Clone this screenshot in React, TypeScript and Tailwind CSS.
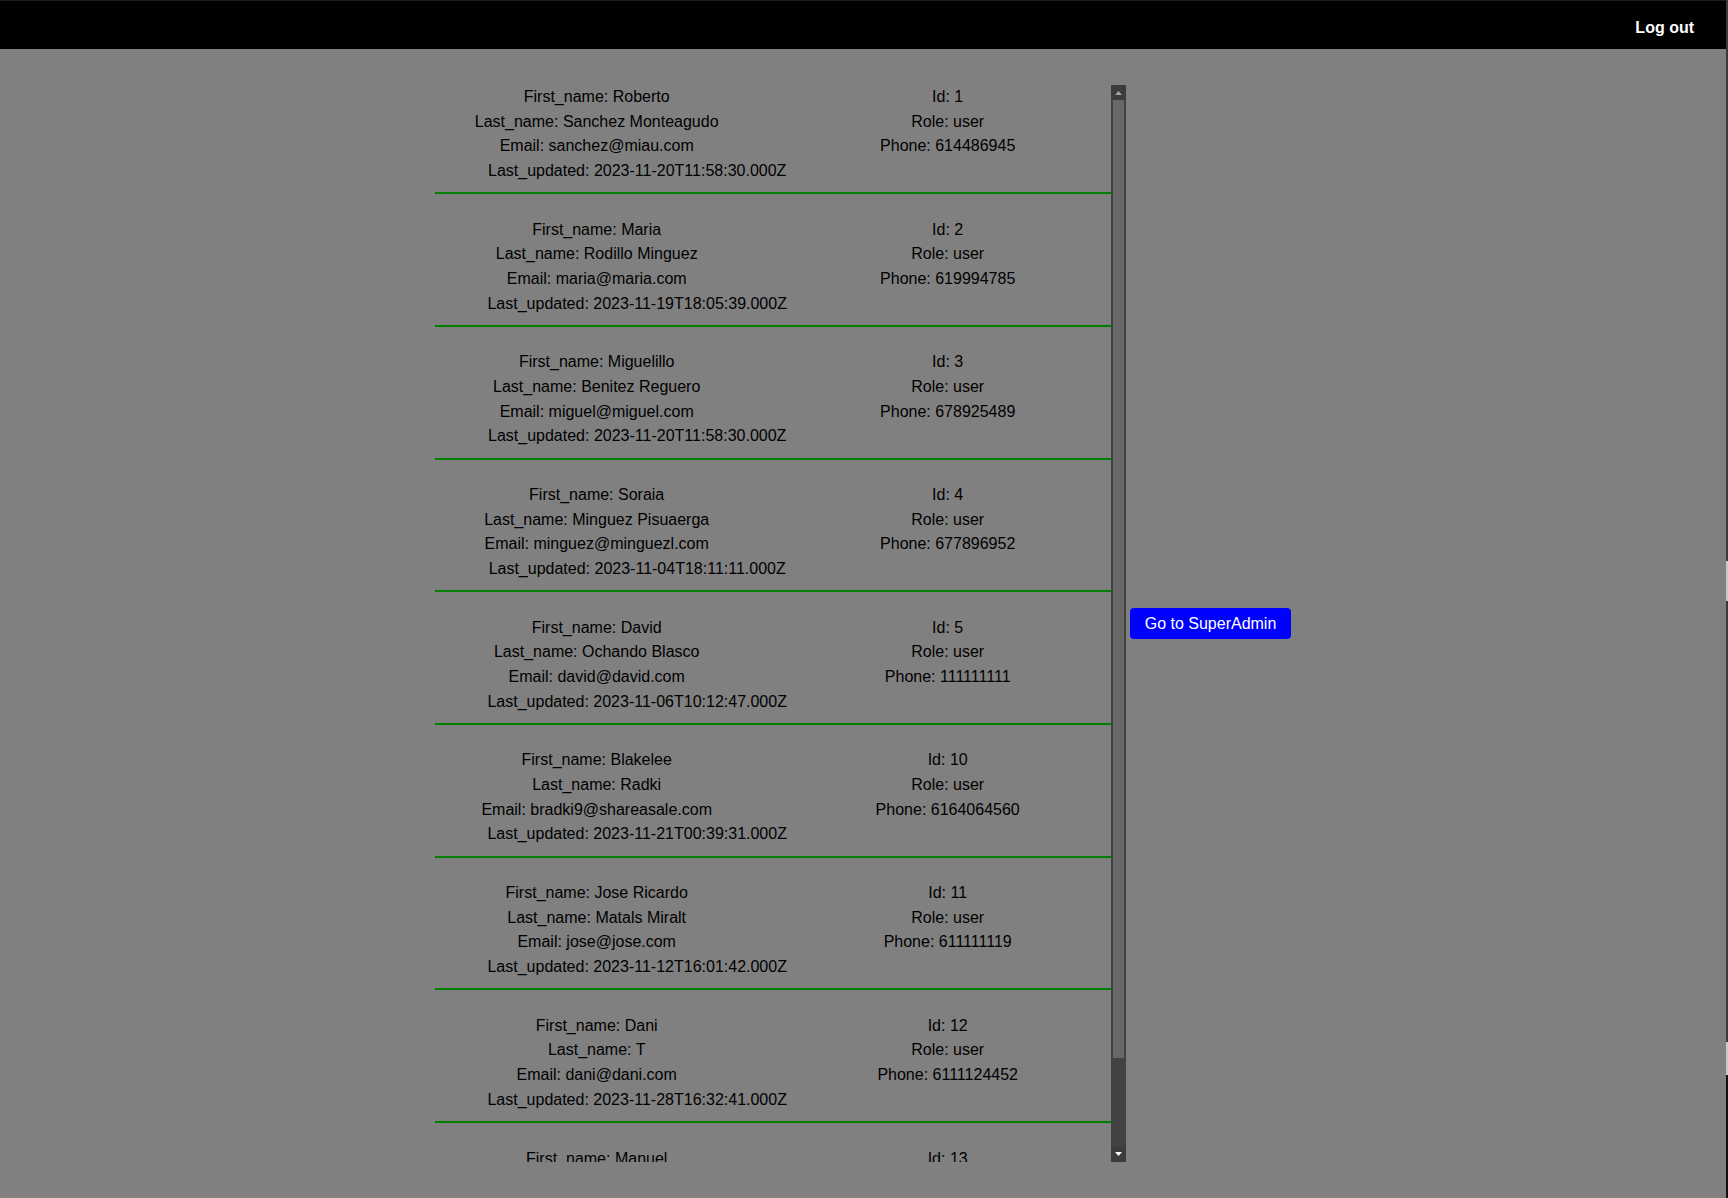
const USERS = [
  { id: 1, first: 'Roberto', last: 'Sanchez Monteagudo', email: 'sanchez@miau.com', updated: '2023-11-20T11:58:30.000Z', phone: '614486945' },
  { id: 2, first: 'Maria', last: 'Rodillo Minguez', email: 'maria@maria.com', updated: '2023-11-19T18:05:39.000Z', phone: '619994785' },
  { id: 3, first: 'Miguelillo', last: 'Benitez Reguero', email: 'miguel@miguel.com', updated: '2023-11-20T11:58:30.000Z', phone: '678925489' },
  { id: 4, first: 'Soraia', last: 'Minguez Pisuaerga', email: 'minguez@minguezl.com', updated: '2023-11-04T18:11:11.000Z', phone: '677896952' },
  { id: 5, first: 'David', last: 'Ochando Blasco', email: 'david@david.com', updated: '2023-11-06T10:12:47.000Z', phone: '111111111' },
  { id: 10, first: 'Blakelee', last: 'Radki', email: 'bradki9@shareasale.com', updated: '2023-11-21T00:39:31.000Z', phone: '6164064560' },
  { id: 11, first: 'Jose Ricardo', last: 'Matals Miralt', email: 'jose@jose.com', updated: '2023-11-12T16:01:42.000Z', phone: '611111119' },
  { id: 12, first: 'Dani', last: 'T', email: 'dani@dani.com', updated: '2023-11-28T16:32:41.000Z', phone: '6111124452' },
  { id: 13, first: 'Manuel', last: 'Garcia Lopez', email: 'manuel@manuel.com', updated: '2023-11-15T09:20:10.000Z', phone: '612345678' },
];

function Arrow({ down, color }: { down?: boolean; color: string }) {
  return (
    <svg width="7" height="4" viewBox="0 0 7 4">
      <polygon points={down ? '0,0 7,0 3.5,4' : '0,4 7,4 3.5,0'} fill={color} />
    </svg>
  );
}

export default function App() {
  return (
    <div className="flex min-h-[1198px] bg-[#808080] font-['Liberation_Sans',Arial,sans-serif] text-base text-black">
      <div className="flex flex-1 flex-col">
        {/* Header */}
        <header className="flex h-[49px] justify-end border-t border-[#1c1c1c] bg-black pr-[32px] pt-[15px]">
          <button className="h-fit font-bold leading-normal text-white">Log out</button>
        </header>

        {/* Body */}
        <main className="flex flex-1 items-center justify-center gap-1">
          <div className="flex h-[1077px] w-[691px]">
            <div className="w-[676px] overflow-hidden">
              {USERS.map((u) => (
                <div key={u.id} className="mb-[23.5px] border-b-2 border-[#008000] pb-[8.5px] leading-[24.67px]">
                  <div className="flex">
                    <div className="w-[324px] text-center">
                      <p>First_name: {u.first}</p>
                      <p>Last_name: {u.last}</p>
                      <p>Email: {u.email}</p>
                    </div>
                    <div className="ml-[26px] w-[326px] text-center">
                      <p>Id: {u.id}</p>
                      <p>Role: user</p>
                      <p>Phone: {u.phone}</p>
                    </div>
                  </div>
                  <p className="w-[405px] text-center">Last_updated: {u.updated}</p>
                </div>
              ))}
            </div>

            {/* Scrollbar */}
            <div className="flex w-[15px] flex-col bg-[#424242]">
              <div className="flex h-[15px] items-start justify-center bg-[#3c3c3c] pt-[6px]">
                <Arrow color="#a3a3a3" />
              </div>
              <div className="flex-1 px-[2px]">
                <div className="h-[958px] bg-[#686868]" />
              </div>
              <div className="flex h-[15px] items-start justify-center bg-[#3c3c3c] pt-[5px]">
                <Arrow down color="#ffffff" />
              </div>
            </div>
          </div>

          <button className="h-[31px] rounded bg-[#0000ff] px-[15px] leading-normal text-white">
            Go to SuperAdmin
          </button>
        </main>
      </div>

      {/* Right edge strip */}
      <div className="flex w-[2px] flex-col">
        <div className="h-[561px] bg-[#3a3a3a]" />
        <div className="h-[40px] bg-[#c8c8c8]" />
        <div className="h-[441px] bg-[#3a3a3a]" />
        <div className="h-[33px] bg-[#c8c8c8]" />
        <div className="flex-1 bg-[#111111]" />
      </div>
    </div>
  );
}
